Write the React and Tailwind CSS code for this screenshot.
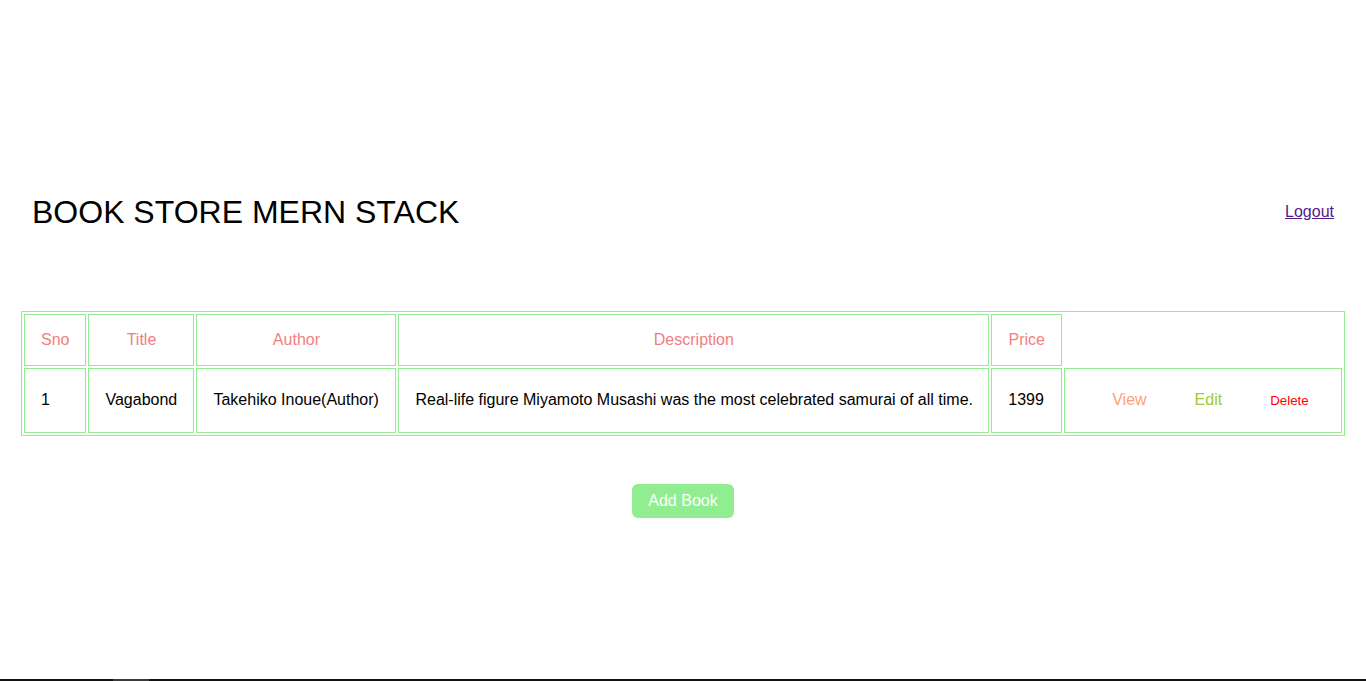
import React from "react";

const books = [
  {
    title: "Vagabond",
    author: "Takehiko Inoue(Author)",
    description:
      "Real-life figure Miyamoto Musashi was the most celebrated samurai of all time.",
    price: 1399,
  },
];

const App = () => {
  return (
    <div className="min-h-[681px] flex flex-col bg-white font-['Liberation_Sans',Arial,sans-serif] text-black">
      {/* Header */}
      <header className="flex items-center justify-between px-[32px] pt-[194px]">
        <h1 className="text-[32px] leading-[37px] font-normal">
          BOOK STORE MERN STACK
        </h1>
        <a href="#" className="text-[16px] leading-[18px] text-[#551a8b] underline -mt-[2px]">
          Logout
        </a>
      </header>

      {/* Books table */}
      <table className="mt-[80px] mx-auto w-[1324px] border border-[#90ee90] border-separate border-spacing-[2px] text-[16px] leading-[18px]">
        <thead>
          <tr className="h-[52px]">
            <th className="border border-[#90ee90] font-normal text-[#f08080] px-4 py-4">Sno</th>
            <th className="border border-[#90ee90] font-normal text-[#f08080] px-4 py-4">Title</th>
            <th className="border border-[#90ee90] font-normal text-[#f08080] px-4 py-4">Author</th>
            <th className="border border-[#90ee90] font-normal text-[#f08080] px-4 py-4">Description</th>
            <th className="border border-[#90ee90] font-normal text-[#f08080] px-4 py-4">Price</th>
          </tr>
        </thead>
        <tbody>
          {books.map((book, i) => (
            <tr key={i} className="h-[65px]">
              <td className="w-[62px] border border-[#90ee90] px-4 pb-[2px] text-left whitespace-nowrap">{i + 1}</td>
              <td className="w-[106px] border border-[#90ee90] px-4 pb-[2px] text-left whitespace-nowrap">{book.title}</td>
              <td className="w-[200px] border border-[#90ee90] px-4 pb-[2px] text-left whitespace-nowrap">{book.author}</td>
              <td className="w-[591px] border border-[#90ee90] pl-4 pr-[10px] pb-[2px] text-left whitespace-nowrap">{book.description}</td>
              <td className="w-[71px] border border-[#90ee90] px-4 pb-[2px] text-left whitespace-nowrap">{book.price}</td>
              <td className="w-[278px] border border-[#90ee90] pl-[23px] pb-[2px]">
                <div className="flex items-center">
                  <a href="#" className="px-[24px] text-[#ffa07a]">View</a>
                  <a href="#" className="px-[24px] text-[#9acd32]">Edit</a>
                  <button className="px-[24px] pt-[2px] text-[13.33px] text-[#ff0000]">Delete</button>
                </div>
              </td>
            </tr>
          ))}
        </tbody>
      </table>

      <div className="flex justify-center mt-[48px]">
        <button className="w-[102px] h-[34px] rounded-[6px] bg-[#90ee90] text-white text-[16px]">
          Add Book
        </button>
      </div>

      {/* bottom strip */}
      <div className="mt-auto flex h-[2px]">
        <div className="w-[113px] bg-[#121212]"></div>
        <div className="w-[36px] bg-[#3a3a3a]"></div>
        <div className="flex-1 bg-[#121212]"></div>
      </div>
    </div>
  );
};

export default App;
